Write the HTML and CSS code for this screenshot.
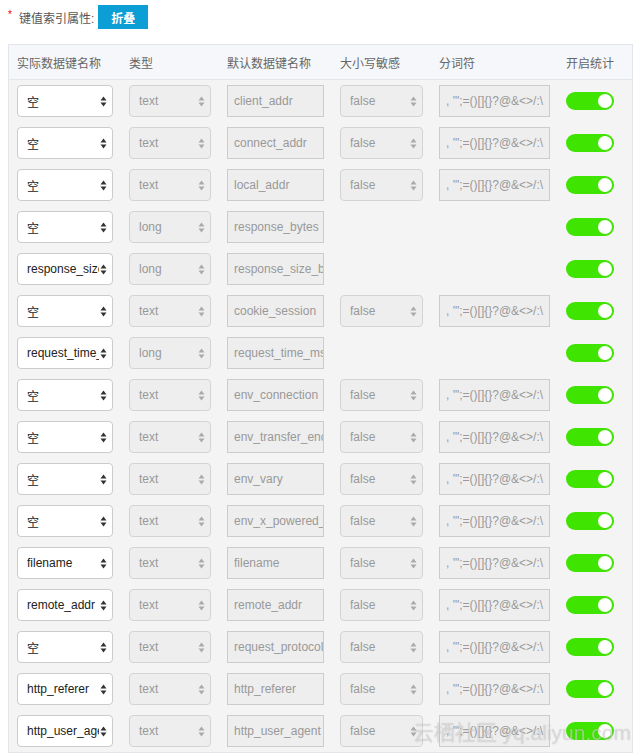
FILE: index.html
```html
<!DOCTYPE html>
<html lang="zh-CN">

<head>
    <meta charset="UTF-8">
    <meta name="viewport" content="width=device-width, initial-scale=1.0">
    <title>键值索引属性</title>
    <link rel="stylesheet" href="styles.css">
</head>

<body>
    <div class="title-row">
        <span class="required">*</span>
        <span class="label">键值索引属性:</span>
        <button class="btn-fold">折叠</button>
    </div>

    <div class="panel">
        <div class="row head">
            <div>实际数据键名称</div>
            <div>类型</div>
            <div>默认数据键名称</div>
            <div>大小写敏感</div>
            <div>分词符</div>
            <div>开启统计</div>
        </div>
        <div id="rows"></div>
    </div>

    <div class="watermark">云栖社区 yq.aliyun.com</div>

    <script>
        var sep = ", '\";=()[]{}?@&<>/:\\";
        var data = [
            ['空', 'text', 'client_addr', true],
            ['空', 'text', 'connect_addr', true],
            ['空', 'text', 'local_addr', true],
            ['空', 'long', 'response_bytes', false],
            ['response_size_', 'long', 'response_size_bytes', false],
            ['空', 'text', 'cookie_session', true],
            ['request_time_', 'long', 'request_time_msec', false],
            ['空', 'text', 'env_connection', true],
            ['空', 'text', 'env_transfer_encoding', true],
            ['空', 'text', 'env_vary', true],
            ['空', 'text', 'env_x_powered_by', true],
            ['filename', 'text', 'filename', true],
            ['remote_addr', 'text', 'remote_addr', true],
            ['空', 'text', 'request_protocol', true],
            ['http_referer', 'text', 'http_referer', true],
            ['http_user_agent', 'text', 'http_user_agent', true]
        ];

        var arrows = '<svg class="arrows" width="7" height="11" viewBox="0 0 7 11">' +
            '<path d="M3.5 0.5 L6.5 4.5 L0.5 4.5 Z"/><path d="M0.5 6.5 L6.5 6.5 L3.5 10.5 Z"/></svg>';

        function select(text, disabled) {
            return '<div class="select' + (disabled ? ' disabled' : '') + '"><span class="val">' +
                text + '</span>' + arrows + '</div>';
        }

        function input(text) {
            var d = document.createElement('div');
            d.className = 'input';
            d.textContent = text;
            return d.outerHTML;
        }

        var html = '';
        data.forEach(function (r) {
            html += '<div class="row">';
            html += '<div>' + select(r[0], false) + '</div>';
            html += '<div>' + select(r[1], true) + '</div>';
            html += '<div>' + input(r[2]) + '</div>';
            html += '<div>' + (r[3] ? select('false', true) : '') + '</div>';
            html += '<div>' + (r[3] ? input(sep) : '') + '</div>';
            html += '<div class="cell-switch"><span class="switch"><span class="knob"></span></span></div>';
            html += '</div>';
        });
        document.getElementById('rows').innerHTML = html;
    </script>
</body>

</html>
```

FILE: styles.css
```css
body {
    margin: 0;
    padding: 5px 10px 0 8px;
    font-family: "Liberation Sans", Arial, "Noto Sans CJK SC", sans-serif;
    font-size: 12px;
    color: #333;
    background-color: #fff;
    overflow: hidden;
}

.title-row {
    display: flex;
    align-items: center;
    height: 24px;
}

.required {
    color: #e00;
    font-size: 10px;
    width: 11px;
    margin-top: -6px;
}

.label {
    color: #555;
    margin-right: 4px;
}

.btn-fold {
    width: 50px;
    height: 24px;
    border: none;
    background-color: #0c9fd6;
    color: #fff;
    font-family: inherit;
    font-size: 12px;
    font-weight: bold;
    padding: 0;
}

.panel {
    margin-top: 15px;
    border: 1px solid #e2e5ea;
    background-color: #f4f4f4;
}

.row {
    display: grid;
    grid-template-columns: 96px 82px 97px 83px 111px 48px;
    column-gap: 16px;
    align-items: center;
    padding: 5px 8px;
    height: 32px;
}

.row.head {
    height: 24px;
    background-color: #f5f7fa;
    border-bottom: 1px solid #e2e5ea;
    color: #666;
    white-space: nowrap;
}

.select {
    display: flex;
    align-items: center;
    height: 30px;
    border: 1px solid #ccc;
    border-radius: 4px;
    background-color: #fff;
    padding: 0 5px 0 9px;
    color: #222;
}

.select .val {
    flex: 1;
    overflow: hidden;
    white-space: nowrap;
}

.arrows {
    flex: none;
    margin-left: 1px;
    fill: #333;
}

.select.disabled {
    background-color: #eee;
    border-color: #d4d4d4;
    color: #999;
}

.select.disabled .arrows {
    fill: #aaa;
}

.input {
    height: 30px;
    line-height: 30px;
    border: 1px solid #ccc;
    background-color: #eee;
    color: #999;
    padding: 0 6px;
    overflow: hidden;
    white-space: nowrap;
}

.cell-switch {
    display: flex;
    align-items: center;
}

.switch {
    display: flex;
    justify-content: flex-end;
    align-items: center;
    width: 48px;
    height: 18px;
    border-radius: 9px;
    background-color: #3fe400;
    padding: 0 2px;
    box-sizing: border-box;
}

.knob {
    width: 14px;
    height: 14px;
    border-radius: 50%;
    background-color: #fff;
}

.watermark {
    position: fixed;
    right: 12px;
    bottom: 10px;
    font-size: 21px;
    color: rgba(255, 255, 255, 0.5);
    text-shadow: 0 0 1px rgba(0, 0, 0, 0.3);
    white-space: nowrap;
    pointer-events: none;
}
```
